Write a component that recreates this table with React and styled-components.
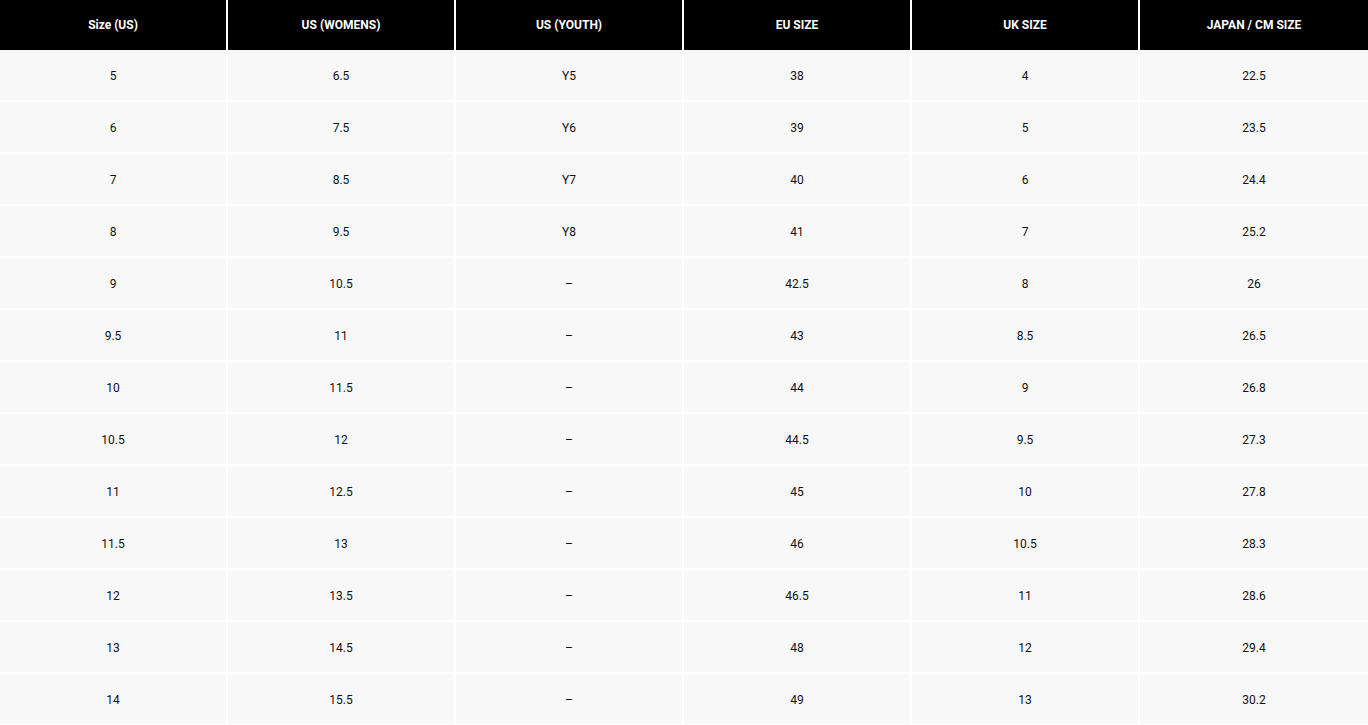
import React from 'react';
import styled, { createGlobalStyle } from 'styled-components';

const GlobalStyle = createGlobalStyle`
  body {
    margin: 0;
    background: #ffffff;
    font-family: Roboto, "Liberation Sans", Arial, sans-serif;
  }
`;

const Table = styled.table`
  width: 100%;
  table-layout: fixed;
  border-collapse: separate;
  border-spacing: 0;
`;

const HeadCell = styled.th`
  box-sizing: border-box;
  height: 50px;
  padding: 0 8px;
  background: #000000;
  color: #ffffff;
  font-size: 12px;
  font-weight: 700;
  text-align: center;
  border-right: 2px solid #ffffff;

  &:last-child {
    border-right: none;
  }
`;

const Cell = styled.td`
  box-sizing: border-box;
  height: 52px;
  padding: 2px 8px 0;
  background: #f8f8f8;
  color: #111111;
  font-size: 12px;
  text-align: center;
  border-right: 2px solid #ffffff;
  border-bottom: 2px solid #ffffff;

  &:last-child {
    border-right: none;
  }
`;

const headers = ['Size (US)', 'US (WOMENS)', 'US (YOUTH)', 'EU SIZE', 'UK SIZE', 'JAPAN / CM SIZE'];

const rows = [
  ['5', '6.5', 'Y5', '38', '4', '22.5'],
  ['6', '7.5', 'Y6', '39', '5', '23.5'],
  ['7', '8.5', 'Y7', '40', '6', '24.4'],
  ['8', '9.5', 'Y8', '41', '7', '25.2'],
  ['9', '10.5', '–', '42.5', '8', '26'],
  ['9.5', '11', '–', '43', '8.5', '26.5'],
  ['10', '11.5', '–', '44', '9', '26.8'],
  ['10.5', '12', '–', '44.5', '9.5', '27.3'],
  ['11', '12.5', '–', '45', '10', '27.8'],
  ['11.5', '13', '–', '46', '10.5', '28.3'],
  ['12', '13.5', '–', '46.5', '11', '28.6'],
  ['13', '14.5', '–', '48', '12', '29.4'],
  ['14', '15.5', '–', '49', '13', '30.2'],
];

const App = () => (
  <>
    <GlobalStyle />
    <Table>
      <thead>
        <tr>
          {headers.map(h => <HeadCell key={h}>{h}</HeadCell>)}
        </tr>
      </thead>
      <tbody>
        {rows.map((row, i) => (
          <tr key={i}>
            {row.map((v, j) => <Cell key={j}>{v}</Cell>)}
          </tr>
        ))}
      </tbody>
    </Table>
  </>
);

export default App;
